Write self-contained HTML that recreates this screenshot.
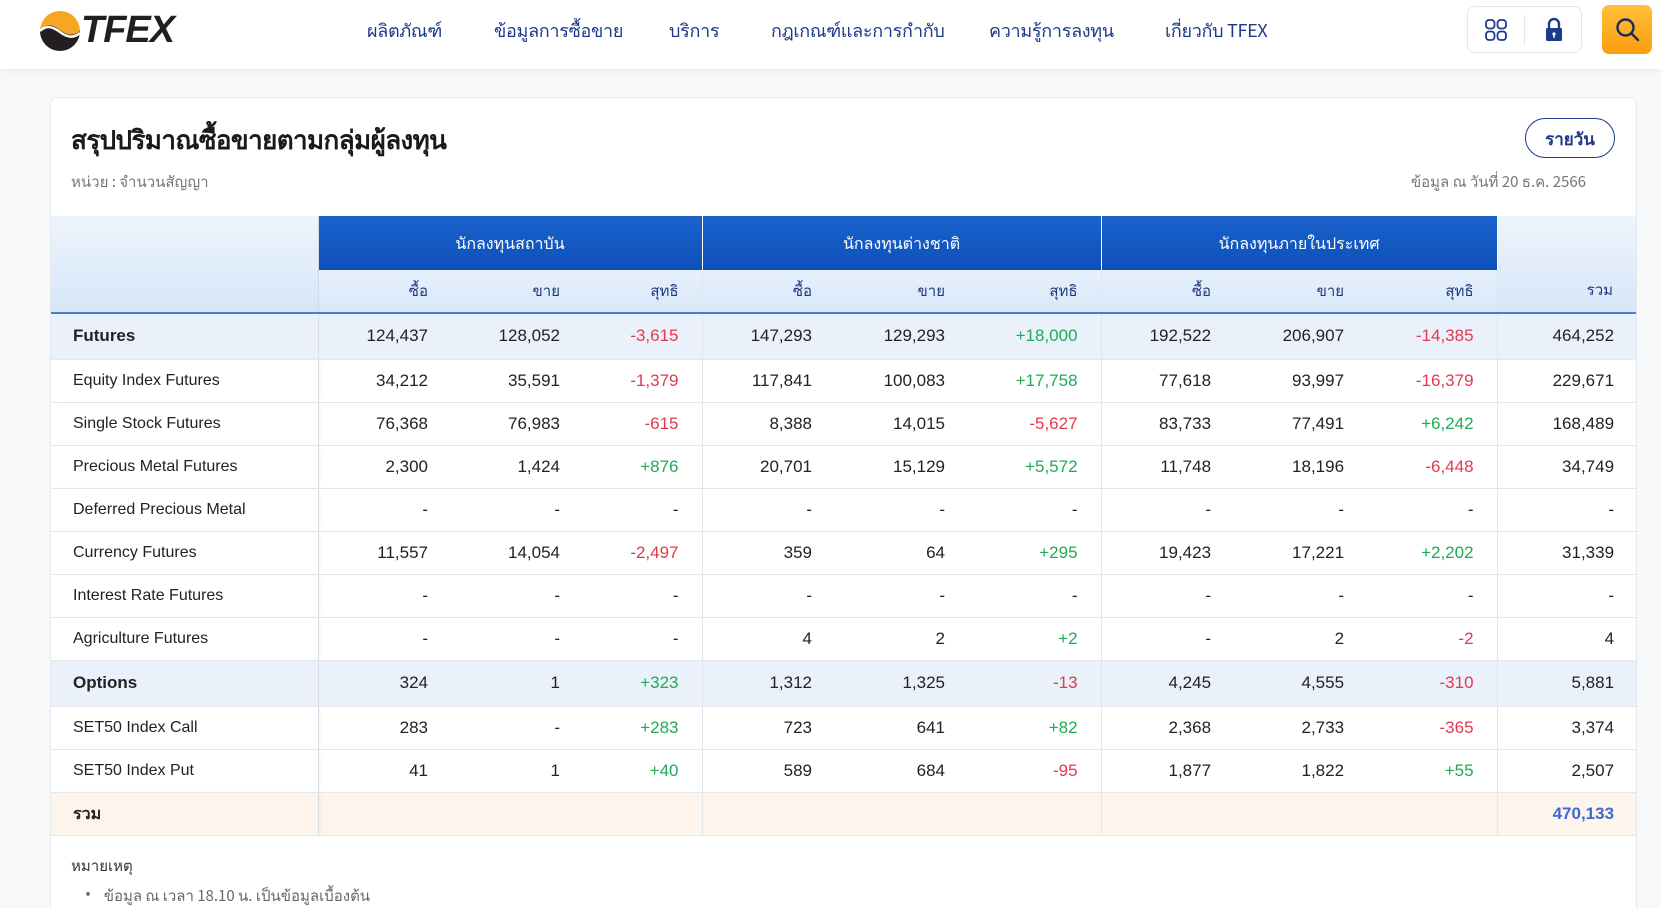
<!DOCTYPE html>
<html style="overflow:hidden;height:908px"><head><meta charset="utf-8"><style>
*{margin:0;padding:0;box-sizing:border-box}
body{width:1661px;height:908px;overflow:hidden;background:#f7f8fa;font-family:"Liberation Sans","Noto Sans CJK SC",sans-serif;color:#222;position:relative}
.hdr{position:absolute;left:0;top:0;width:1661px;height:69px;background:#fff;box-shadow:0 2px 6px rgba(0,0,0,.05)}
.nav{position:absolute;top:17px;font-size:18px;color:#1d3a8a;white-space:nowrap;font-family:"Noto Sans CJK SC","Liberation Sans",sans-serif;line-height:26px;letter-spacing:-0.3px}
.card{position:absolute;left:50px;top:97px;width:1587px;height:811px;background:#fff;border:1px solid #e6e9ee;border-bottom:none;border-radius:8px 8px 0 0;overflow:hidden}
.th{font-family:"Noto Sans CJK SC","Liberation Sans",sans-serif}
table{position:absolute;left:0;top:118px;border-collapse:collapse;width:1586px;table-layout:fixed}
td,th{font-size:17px;text-align:right;padding-right:23px;font-weight:normal;white-space:nowrap}
td.l{text-align:left;padding-left:22px;font-size:16px;color:#222;border-right:1px solid #d8dde6;box-shadow:3px 0 4px -2px rgba(0,0,0,.08)}
tr.r td{height:43px;border-bottom:1px solid #e3e6ea}
tr.s td{height:46px;background:#eaf1fb;border-bottom:1px solid #e3e6ea}
tr.s td.l{font-weight:bold;font-size:17px}
.g{border-right:1px solid #e1e5ec}
.red{color:#e4384e}.grn{color:#1faa55}
.h1 th{height:54px;background:linear-gradient(#1a62cc,#0e50b9);color:#fff;text-align:center;padding:0;font-size:16px;border-right:1px solid #fff}
.h2 th{height:43px;background:linear-gradient(#e8f1fc,#d7e7f9);color:#1e3a7a;font-size:15px;border-bottom:2px solid #4b7ccc}
th.corner{background:linear-gradient(#eef4fc,#d6e6f8)!important;border-bottom:2px solid #4b7ccc;border-right:1px solid #d0d8e4}
</style></head><body>
<div class="hdr">
 <svg style="position:absolute;left:40px;top:11px" width="40" height="40" viewBox="0 0 40 40">
  <circle cx="20" cy="20" r="20" fill="#f6a623"/>
  <path d="M0 20 C6 12 12 13 20 19 C28 25 34 25 40 20 A20 20 0 0 1 0 20Z" fill="#231f20"/>
  <path d="M0 20 C6 14 12 15 20 21 C28 27 34 27 40 22" stroke="#fff" stroke-width="2.5" fill="none"/>
 </svg>
 <div style="position:absolute;left:81px;top:9px;font-size:38px;font-weight:bold;font-style:italic;color:#231f20;letter-spacing:-1px">TFEX</div>
 <div class="nav" style="left:367px">ผลิตภัณฑ์</div>
 <div class="nav" style="left:494px">ข้อมูลการซื้อขาย</div>
 <div class="nav" style="left:669px">บริการ</div>
 <div class="nav" style="left:771px">กฎเกณฑ์และการกำกับ</div>
 <div class="nav" style="left:989px">ความรู้การลงทุน</div>
 <div class="nav" style="left:1165px">เกี่ยวกับ TFEX</div>
 <div style="position:absolute;left:1467px;top:6px;width:115px;height:47px;border:1px solid #e3e6ea;border-radius:8px;background:#fff">
  <div style="position:absolute;left:56px;top:8px;width:1px;height:30px;background:#e3e6ea"></div>
  <svg style="position:absolute;left:17px;top:12px" width="22" height="22" viewBox="0 0 22 22" fill="none" stroke="#1d3a8a" stroke-width="1.8"><rect x="1" y="1" width="8.5" height="8.5" rx="3"/><rect x="12.5" y="1" width="8.5" height="8.5" rx="3"/><rect x="1" y="12.5" width="8.5" height="8.5" rx="3"/><rect x="12.5" y="12.5" width="8.5" height="8.5" rx="3"/></svg>
  <svg style="position:absolute;left:77px;top:10px" width="18" height="25" viewBox="0 0 18 25"><path d="M4 11V7a5 5 0 0 1 10 0v4" stroke="#1d3a8a" stroke-width="2.4" fill="none"/><rect x="1" y="11" width="16" height="13" rx="1.5" fill="#1d3a8a"/><circle cx="9" cy="17" r="1.6" fill="#fff"/><rect x="8.3" y="17" width="1.4" height="4" fill="#fff"/></svg>
 </div>
 <div style="position:absolute;left:1602px;top:5px;width:50px;height:49px;border-radius:7px;background:linear-gradient(#ffc03a,#fb9d0c)">
  <svg style="position:absolute;left:13px;top:12px" width="26" height="26" viewBox="0 0 26 26" fill="none" stroke="#1d2b55" stroke-width="2.4"><circle cx="10.5" cy="10.5" r="8"/><path d="M16.5 16.5L23 23" stroke-linecap="round"/></svg>
 </div>
</div>
<div class="card">
 <div class="th" style="position:absolute;left:20px;top:22px;font-size:26px;font-weight:bold;color:#1a1a1a;letter-spacing:-0.6px">สรุปปริมาณซื้อขายตามกลุ่มผู้ลงทุน</div>
 <div class="th" style="position:absolute;left:20px;top:72px;font-size:15px;color:#777">หน่วย : จำนวนสัญญา</div>
 <div class="th" style="position:absolute;left:1474px;top:20px;width:90px;height:40px;border:1.5px solid #1d3a8a;border-radius:20px;text-align:center;line-height:37px;font-size:17px;font-weight:bold;color:#1d3a8a">รายวัน</div>
 <div class="th" style="position:absolute;right:50px;top:72px;font-size:15px;color:#777">ข้อมูล ณ วันที่ 20 ธ.ค. 2566</div>
 <table>
  <colgroup><col style="width:267px"><col style="width:133px"><col style="width:132px"><col style="width:119px"><col style="width:133px"><col style="width:133px"><col style="width:133px"><col style="width:133px"><col style="width:133px"><col style="width:130px"><col style="width:140px"></colgroup>
  <tr class="h1 th"><th class="corner" rowspan="2"></th><th colspan="3">นักลงทุนสถาบัน</th><th colspan="3">นักลงทุนต่างชาติ</th><th colspan="3">นักลงทุนภายในประเทศ</th><th class="corner" rowspan="2" style="vertical-align:bottom;padding-bottom:10px;padding-right:24px;color:#1e3a7a;font-size:15px;border-right:none;text-align:right">รวม</th></tr>
  <tr class="h2 th"><th>ซื้อ</th><th>ขาย</th><th class="g">สุทธิ</th><th>ซื้อ</th><th>ขาย</th><th class="g">สุทธิ</th><th>ซื้อ</th><th>ขาย</th><th class="g">สุทธิ</th></tr>
  <tr class="s"><td class="l">Futures</td><td>124,437</td><td>128,052</td><td class="g red">-3,615</td><td>147,293</td><td>129,293</td><td class="g grn">+18,000</td><td>192,522</td><td>206,907</td><td class="g red">-14,385</td><td>464,252</td></tr>
  <tr class="r"><td class="l">Equity Index Futures</td><td>34,212</td><td>35,591</td><td class="g red">-1,379</td><td>117,841</td><td>100,083</td><td class="g grn">+17,758</td><td>77,618</td><td>93,997</td><td class="g red">-16,379</td><td>229,671</td></tr>
  <tr class="r"><td class="l">Single Stock Futures</td><td>76,368</td><td>76,983</td><td class="g red">-615</td><td>8,388</td><td>14,015</td><td class="g red">-5,627</td><td>83,733</td><td>77,491</td><td class="g grn">+6,242</td><td>168,489</td></tr>
  <tr class="r"><td class="l">Precious Metal Futures</td><td>2,300</td><td>1,424</td><td class="g grn">+876</td><td>20,701</td><td>15,129</td><td class="g grn">+5,572</td><td>11,748</td><td>18,196</td><td class="g red">-6,448</td><td>34,749</td></tr>
  <tr class="r"><td class="l">Deferred Precious Metal</td><td>-</td><td>-</td><td class="g">-</td><td>-</td><td>-</td><td class="g">-</td><td>-</td><td>-</td><td class="g">-</td><td>-</td></tr>
  <tr class="r"><td class="l">Currency Futures</td><td>11,557</td><td>14,054</td><td class="g red">-2,497</td><td>359</td><td>64</td><td class="g grn">+295</td><td>19,423</td><td>17,221</td><td class="g grn">+2,202</td><td>31,339</td></tr>
  <tr class="r"><td class="l">Interest Rate Futures</td><td>-</td><td>-</td><td class="g">-</td><td>-</td><td>-</td><td class="g">-</td><td>-</td><td>-</td><td class="g">-</td><td>-</td></tr>
  <tr class="r"><td class="l">Agriculture Futures</td><td>-</td><td>-</td><td class="g">-</td><td>4</td><td>2</td><td class="g grn">+2</td><td>-</td><td>2</td><td class="g red">-2</td><td>4</td></tr>
  <tr class="s"><td class="l">Options</td><td>324</td><td>1</td><td class="g grn">+323</td><td>1,312</td><td>1,325</td><td class="g red">-13</td><td>4,245</td><td>4,555</td><td class="g red">-310</td><td>5,881</td></tr>
  <tr class="r"><td class="l">SET50 Index Call</td><td>283</td><td>-</td><td class="g grn">+283</td><td>723</td><td>641</td><td class="g grn">+82</td><td>2,368</td><td>2,733</td><td class="g red">-365</td><td>3,374</td></tr>
  <tr class="r"><td class="l">SET50 Index Put</td><td>41</td><td>1</td><td class="g grn">+40</td><td>589</td><td>684</td><td class="g red">-95</td><td>1,877</td><td>1,822</td><td class="g grn">+55</td><td>2,507</td></tr>
  <tr class="r" style="background:#fdf4ec"><td class="l th" style="font-weight:bold;height:40px">รวม</td><td></td><td></td><td class="g"></td><td></td><td></td><td class="g"></td><td></td><td></td><td class="g"></td><td style="color:#3a6ad6;font-weight:bold">470,133</td></tr>
 </table>
 <div class="th" style="position:absolute;left:20px;top:756px;font-size:15px;color:#333">หมายเหตุ</div>
 <div class="th" style="position:absolute;left:28px;top:786px;font-size:15px;color:#666"><span style="font-size:18px;line-height:15px">•</span>&nbsp; ข้อมูล ณ เวลา 18.10 น. เป็นข้อมูลเบื้องต้น</div>
</div>
</body></html>
